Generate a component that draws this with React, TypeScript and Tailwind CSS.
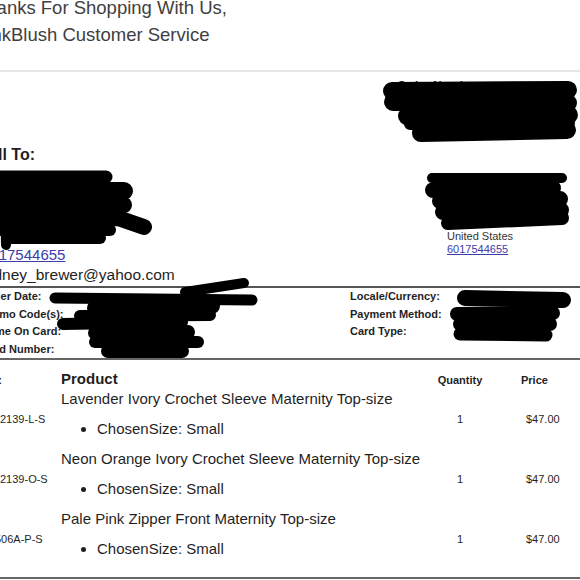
const items = [
  { sku: '2139-L-S', skuShift: '', name: 'Lavender Ivory Crochet Sleeve Maternity Top-size' },
  { sku: '2139-O-S', skuShift: '', name: 'Neon Orange Ivory Crochet Sleeve Maternity Top-size' },
  { sku: '506A-P-S', skuShift: 'ml-[-5px]', name: 'Pale Pink Zipper Front Maternity Top-size' },
];

// black marker scribbles laid over the private fields
const scribbles: { d: string; w: number }[] = [
  // order number
  { d: 'M392 91 L568 90', w: 18 },
  { d: 'M393 102 L568 103', w: 18 },
  { d: 'M407 116 L569 115', w: 18 },
  { d: 'M410 124 L569 123', w: 12 },
  { d: 'M421 133 L567 130', w: 18 },
  // bill to
  { d: 'M-5 177 L106 177', w: 13 },
  { d: 'M-5 191 L124 191', w: 18 },
  { d: 'M-5 205 L124 205', w: 16 },
  { d: 'M-5 220 L118 218 L144 227', w: 16 },
  { d: 'M-5 230 L110 230', w: 12 },
  { d: 'M8 238 L100 238', w: 12 },
  { d: 'M5 200 L6 245', w: 10 },
  // ship to
  { d: 'M432 178 L562 178', w: 10 },
  { d: 'M433 190 L553 188', w: 16 },
  { d: 'M440 201 L560 199', w: 16 },
  { d: 'M443 212 L561 210', w: 16 },
  { d: 'M448 223 L562 218', w: 14 },
  // order info left
  { d: 'M185 292 L244 283', w: 10 },
  { d: 'M55 298 L252 300', w: 11 },
  { d: 'M95 308 L212 306', w: 16 },
  { d: 'M80 316 L210 315', w: 12 },
  { d: 'M63 324 L182 322', w: 12 },
  { d: 'M95 333 L188 332', w: 14 },
  { d: 'M95 342 L198 342', w: 12 },
  { d: 'M108 351 L182 351', w: 14 },
  // order info right
  { d: 'M465 298 L563 300', w: 16 },
  { d: 'M457 314 L553 313', w: 14 },
  { d: 'M460 324 L550 324', w: 14 },
  { d: 'M460 334 L546 335', w: 13 },
];

export default function App() {
  return (
    <div className="relative w-[580px] h-[580px] overflow-hidden bg-white font-['Liberation_Sans',Arial,sans-serif] text-[#1f1f1f]">
      {/* Greeting */}
      <div className="mt-[-6px] ml-[-25px] text-[18.5px] leading-[27px] text-[#404040] whitespace-nowrap">
        <p>Thanks For Shopping With Us,</p>
        <p>PinkBlush Customer Service</p>
      </div>

      <div className="mt-[22px] border-t-2 border-[#e6e6e6]" />

      {/* Addresses */}
      <div className="flex h-[214px] whitespace-nowrap">
        <div className="ml-[-18px] pt-[73px]">
          <p className="text-[16px] font-bold leading-[20px]">Bill To:</p>
          <div className="h-[80px]" />
          <a className="block text-[15px] leading-[20px] text-[#3c3cab] underline">6017544655</a>
          <p className="ml-[-4px] text-[15.5px] leading-[20px]">sydney_brewer@yahoo.com</p>
        </div>
        <div className="ml-auto w-[183px] pt-[6px]">
          <p className="text-[12px] font-bold leading-[16px]">Order Number:</p>
          <div className="pl-[50px] pt-[77px]">
            <p className="text-[11px] font-bold leading-[13px]">Ship To:</p>
            <div className="h-[46px]" />
            <p className="text-[11px] leading-[13px] text-[#333]">United States</p>
            <a className="block text-[11px] leading-[13px] text-[#3c3cab] underline">6017544655</a>
          </div>
        </div>
      </div>

      <div className="border-t-2 border-[#555]" />

      {/* Order info */}
      <div className="flex h-[70px] text-[11px] font-bold leading-[17.5px] whitespace-nowrap">
        <div className="ml-[-19px] w-[369px]">
          <p>Order Date:</p>
          <p>Promo Code(s):</p>
          <p>Name On Card:</p>
          <p>Card Number:</p>
        </div>
        <div>
          <p>Locale/Currency:</p>
          <p>Payment Method:</p>
          <p>Card Type:</p>
        </div>
      </div>

      <div className="border-t-2 border-[#666]" />

      {/* Products */}
      <div className="pt-[8.5px] whitespace-nowrap">
        <div className="grid grid-cols-[61px_370px_58px_1fr] items-baseline">
          <span className="ml-[-25px] text-[11px] font-bold">SKU:</span>
          <span className="text-[15px] font-bold leading-[20px]">Product</span>
          <span className="text-center text-[11px] font-bold">Quantity</span>
          <span className="pl-[32px] text-[11px] font-bold">Price</span>
        </div>
        {items.map((item) => (
          <div key={item.name} className="grid grid-cols-[61px_370px_58px_1fr] items-center">
            <span className={`text-[11px] leading-[14px] ${item.skuShift}`}>{item.sku}</span>
            <div className="pb-[10px]">
              <p className="text-[15px] leading-[20px]">{item.name}</p>
              <ul className="mt-[10px] list-disc pl-[36px] text-[15px] leading-[20px]">
                <li>ChosenSize: Small</li>
              </ul>
            </div>
            <span className="text-center text-[11px] leading-[14px]">1</span>
            <span className="pl-[37px] text-[11px] leading-[14px]">$47.00</span>
          </div>
        ))}
        <div className="mt-[8px] border-t-2 border-[#666]" />
      </div>

      {/* Redaction marks */}
      <svg className="absolute inset-0 pointer-events-none" width="580" height="580" viewBox="0 0 580 580">
        {scribbles.map((s, i) => (
          <path key={i} d={s.d} stroke="#000" strokeWidth={s.w} strokeLinecap="round" strokeLinejoin="round" fill="none" />
        ))}
      </svg>
    </div>
  );
}
